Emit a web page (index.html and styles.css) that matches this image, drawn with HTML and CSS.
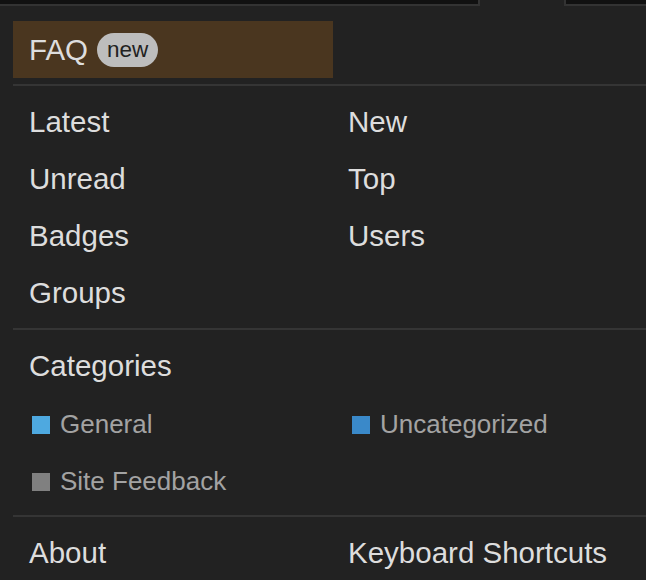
FILE: index.html
```html
<!DOCTYPE html>
<html lang="en">
<head>
  <meta charset="UTF-8">
  <meta name="viewport" content="width=device-width, initial-scale=1.0">
  <title>Menu</title>
  <link rel="stylesheet" href="styles.css">
</head>
<body>
  <div class="top-strip">
    <div class="strip-box strip-left"></div>
    <div class="strip-tab"></div>
    <div class="strip-box strip-right"></div>
  </div>

  <div class="menu-panel">
    <ul class="menu-list single">
      <li class="menu-item active">FAQ<span class="badge-new">new</span></li>
    </ul>
    <hr class="menu-sep first">

    <ul class="menu-list">
      <li class="menu-item">Latest</li>
      <li class="menu-item">New</li>
      <li class="menu-item">Unread</li>
      <li class="menu-item">Top</li>
      <li class="menu-item">Badges</li>
      <li class="menu-item">Users</li>
      <li class="menu-item">Groups</li>
    </ul>
    <hr class="menu-sep">

    <ul class="menu-list">
      <li class="menu-item">Categories</li>
      <li></li>
      <li class="menu-item category"><span class="cat-box general"></span>General</li>
      <li class="menu-item category"><span class="cat-box uncategorized"></span>Uncategorized</li>
      <li class="menu-item category"><span class="cat-box feedback"></span>Site Feedback</li>
    </ul>
    <hr class="menu-sep">

    <ul class="menu-list">
      <li class="menu-item">About</li>
      <li class="menu-item">Keyboard Shortcuts</li>
    </ul>
  </div>
</body>
</html>
```

FILE: styles.css
```css
html, body {
  margin: 0;
  padding: 0;
  background-color: #222;
  overflow: hidden;
}
body {
  font-family: "Liberation Sans", Arial, Helvetica, sans-serif;
  color: #ddd;
  width: 646px;
  height: 580px;
}
.top-strip {
  display: flex;
  height: 6px;
}
.strip-box {
  background-color: #111;
  border-bottom: 2px solid #333;
  box-sizing: border-box;
  height: 6px;
}
.strip-left {
  width: 480px;
  border-right: 2px solid #333;
}
.strip-tab {
  width: 84px;
}
.strip-right {
  flex: 1;
  border-left: 2px solid #333;
}
.menu-panel {
  width: 660px;
  margin-left: 13px;
  padding-top: 15px;
}
.menu-list {
  list-style: none;
  margin: 0;
  padding: 0;
  display: grid;
  grid-template-columns: 320px 320px;
}
.menu-item {
  box-sizing: border-box;
  height: 57px;
  line-height: 57px;
  padding: 0 16px 0 16px;
  font-size: 29.5px;
  white-space: nowrap;
}
.menu-list li:nth-child(2n) {
  padding-left: 15px;
}
.menu-item.active {
  background-color: #4a361f;
}
.badge-new {
  display: inline-block;
  vertical-align: 3px;
  height: 34px;
  line-height: 34px;
  padding: 0 10px;
  margin-left: 9px;
  border-radius: 17px;
  background-color: #bdbdbd;
  color: #222;
  font-size: 22.5px;
}
.menu-sep {
  border: 0;
  height: 2px;
  background-color: #353535;
  margin: 7px 0 7px 0;
}
.menu-sep.first {
  margin-top: 6px;
}
.menu-item.category {
  display: flex;
  align-items: center;
  padding-top: 3px;
  padding-left: 19px;
  font-size: 26px;
  color: #a3a3a3;
}
.menu-list li.category:nth-child(2n) {
  padding-left: 19px;
}
.cat-box {
  width: 18px;
  height: 18px;
  margin-right: 10px;
  margin-top: 1px;
}
.cat-box.general {
  background-color: #4ea9e0;
}
.cat-box.uncategorized {
  background-color: #3a89c9;
}
.cat-box.feedback {
  background-color: #808080;
}
```
